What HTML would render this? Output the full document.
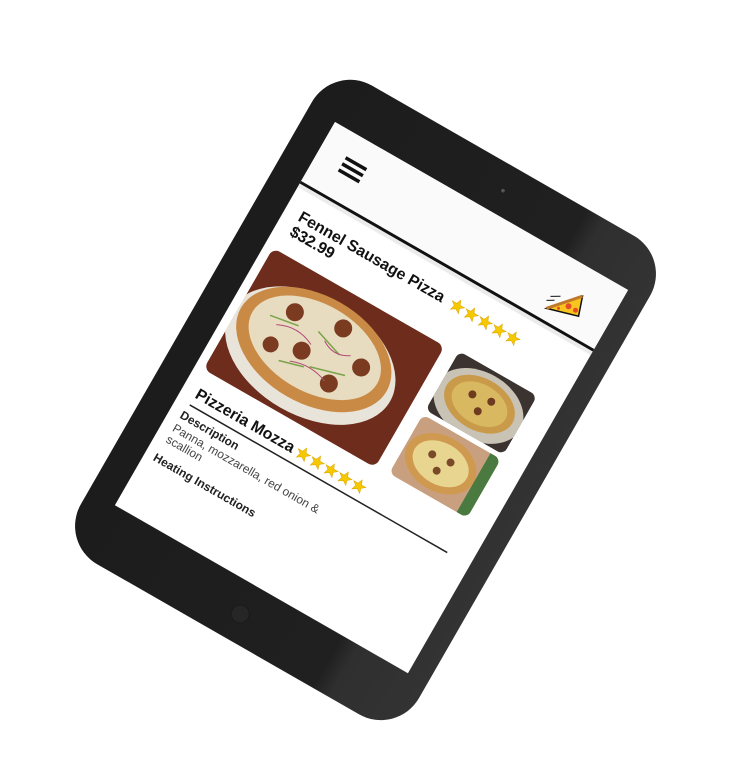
<!DOCTYPE html>
<html><head><meta charset="utf-8"><style>
html,body{margin:0;padding:0;background:#fff;width:736px;height:779px;overflow:hidden}
text{font-family:"Liberation Sans",Arial,sans-serif}
</style></head><body>
<svg width="736" height="779" viewBox="0 0 736 779" xmlns="http://www.w3.org/2000/svg">
<defs>
<linearGradient id="bz" x1="0" y1="0" x2="1" y2="0">
<stop offset="0" stop-color="#1c1c1c"/><stop offset="0.75" stop-color="#202020"/><stop offset="0.8" stop-color="#2f2f2f"/><stop offset="1" stop-color="#333"/>
</linearGradient>
<clipPath id="c1"><rect x="9" y="140" width="198" height="140" rx="8"/></clipPath>
<clipPath id="c2"><rect x="222" y="137" width="90" height="68" rx="7"/></clipPath>
<clipPath id="c3"><rect x="222" y="210" width="90" height="68" rx="7"/></clipPath>
<g id="star"><polygon points="0,-7 2,-2.2 7,-2.2 3,1 4.5,6 0,3 -4.5,6 -3,1 -7,-2.2 -2,-2.2" fill="#f5c800" stroke="#d9a400" stroke-width="0.5"/></g>
</defs>
<g transform="matrix(0.867,0.497,-0.498,0.867,335,122)">
 <rect x="-30" y="-50" width="390" height="552" rx="44" fill="url(#bz)"/>
 <circle cx="163" cy="474" r="9" fill="#262626" stroke="#1a1a1a"/>
 <circle cx="180" cy="-24" r="1.8" fill="#555"/>
 <rect x="0" y="0" width="338" height="442" fill="#fff"/>
 <rect x="0" y="0" width="338" height="68" fill="#fafafa"/>
 <rect x="0" y="68" width="338" height="3" fill="#111"/>
 <rect x="0" y="71" width="338" height="4" fill="#ddd" opacity="0.6"/>
 <rect x="27" y="24" width="24" height="3.5" fill="#111"/>
 <rect x="27" y="31" width="24" height="3.5" fill="#111"/>
 <rect x="27" y="38" width="24" height="3.5" fill="#111"/>
 <g transform="translate(290,44) rotate(-30)">
  <polygon points="-18,4 18,-8 14,12" fill="#f7c51e" stroke="#111" stroke-width="1.5"/>
  <path d="M-18,4 L18,-8" stroke="#c0792a" stroke-width="3"/>
  <circle cx="4" cy="2" r="3" fill="#e64b2b"/><circle cx="11" cy="6" r="2.5" fill="#e64b2b"/><circle cx="-6" cy="4" r="1.5" fill="#e64b2b"/>
  <path d="M-18,-4 h8 M-14,-8 h10" stroke="#111" stroke-width="1"/>
 </g>
 <text x="16" y="104" font-size="16" font-weight="bold" fill="#111">Fennel Sausage Pizza</text>
 <text x="16" y="121" font-size="16" font-weight="bold" fill="#111">$32.99</text>
 <use href="#star" x="198" y="99"/><use href="#star" x="214" y="99"/><use href="#star" x="230" y="99"/><use href="#star" x="246" y="99"/><use href="#star" x="262" y="99"/>
 <g clip-path="url(#c1)">
  <rect x="9" y="140" width="198" height="140" fill="#6e2c1c"/>
  <ellipse cx="95" cy="215" rx="92" ry="60" fill="#e9e4da"/>
  <ellipse cx="95" cy="208" rx="84" ry="54" fill="#c98a46"/>
  <ellipse cx="95" cy="206" rx="72" ry="44" fill="#e8dcc0"/>
  <g fill="#7a3b20"><circle cx="60" cy="185" r="9"/><circle cx="110" cy="175" r="9"/><circle cx="145" cy="200" r="9"/><circle cx="85" cy="215" r="9"/><circle cx="55" cy="225" r="8"/><circle cx="125" cy="230" r="9"/></g>
  <g stroke="#7aa34a" stroke-width="1.5"><path d="M40,200 L70,195 M90,190 L120,200 M100,225 L135,215 M70,235 L95,228"/></g>
  <g stroke="#b04a7a" stroke-width="1" fill="none"><path d="M50,205 q20,-10 40,0 M100,195 q15,10 30,0 M80,230 q20,-8 40,0"/></g>
 </g>
 <g clip-path="url(#c2)">
  <rect x="222" y="137" width="90" height="68" fill="#3a3330"/>
  <ellipse cx="266" cy="175" rx="48" ry="34" fill="#c9c3b6"/>
  <ellipse cx="266" cy="173" rx="38" ry="26" fill="#c99a4a"/>
  <ellipse cx="266" cy="173" rx="30" ry="20" fill="#d8b860"/>
  <g fill="#6e3a20"><circle cx="255" cy="168" r="4"/><circle cx="275" cy="165" r="4"/><circle cx="268" cy="180" r="4"/></g>
 </g>
 <g clip-path="url(#c3)">
  <rect x="222" y="210" width="90" height="68" fill="#c8a080"/>
  <ellipse cx="262" cy="244" rx="38" ry="28" fill="#cf9a50"/>
  <ellipse cx="262" cy="244" rx="30" ry="21" fill="#e8d590"/>
  <g fill="#7a4a28"><circle cx="250" cy="240" r="4"/><circle cx="270" cy="238" r="4"/><circle cx="262" cy="252" r="4"/></g>
  <rect x="300" y="210" width="12" height="68" fill="#4a7a40"/>
 </g>
 <text x="15" y="309" font-size="16" font-weight="bold" fill="#111">Pizzeria Mozza</text>
 <use href="#star" x="138" y="304"/><use href="#star" x="154" y="304"/><use href="#star" x="170" y="304"/><use href="#star" x="186" y="304"/><use href="#star" x="202" y="304"/>
 <rect x="15" y="317" width="297" height="1.5" fill="#222"/>
 <text x="12" y="334" font-size="12" font-weight="bold" fill="#222">Description</text>
 <text x="12" y="349" font-size="12" fill="#444">Panna, mozzarella, red onion &amp;</text>
 <text x="12" y="362" font-size="12" fill="#444">scallion</text>
 <text x="10" y="384" font-size="12" font-weight="bold" fill="#222">Heating Instructions</text>
</g>
</svg>
</body></html>
